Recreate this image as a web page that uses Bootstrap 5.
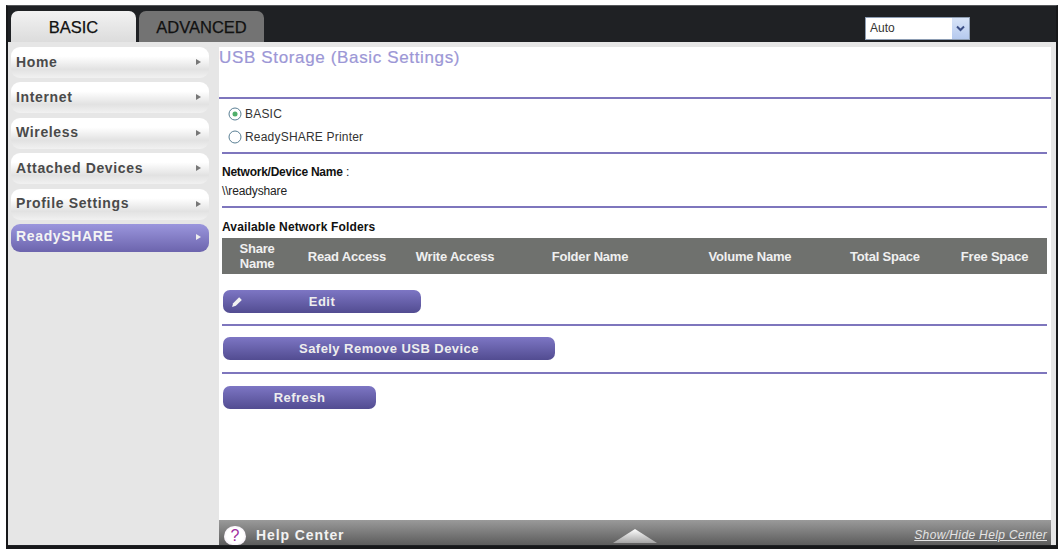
<!DOCTYPE html>
<html lang="en">
  <head>
    <meta charset="UTF-8" />
    <meta name="viewport" content="width=device-width, initial-scale=1.0" />
    <title>USB Storage (Basic Settings)</title>
    <link rel="stylesheet" href="https://cdn.jsdelivr.net/npm/bootstrap@5.3.0/dist/css/bootstrap.min.css" />
    <style>
      html, body { height: 551px; overflow: hidden; background: #fff; }
      body { font-family: "Liberation Sans", Arial, sans-serif; font-size: 12px; color: #222; padding: 5px 4px 2px 6px; }
      .frame { height: 544px; width: 1052px; background: #1f2124; border: solid #17181a; border-width: 1px 2px 3px 2px; border-top-color: #55575a; }
      .topbar { height: 36px; padding: 5px 0 0 3px; }
      .tab-btn { width: 125px; height: 31px; border-radius: 7px 7px 0 0; font-size: 16.5px; text-align: center; line-height: 33px; color: #111; text-decoration: none; -webkit-text-stroke: .25px #111; }
      .tab-on { background: linear-gradient(#f2f2f2, #dcdcdc); }
      .tab-off { background: #737373; margin-left: 3px; }
      .lang-pick { width: 105px; height: 23px; margin-top: 6px; background: #fff; border: 1px solid #8d9db3; font-size: 12px; padding: 0 0 0 4px; line-height: 21px; color: #333; }
      .lang-arrow { width: 17px; height: 21px; background: linear-gradient(#d8e4f8, #b5c9ee); }
      .lang-spot { margin-right: 86px; }
      .shell { height: 503px; background: #e6e6e6; padding: 5px 5px 0 0; }
      .side { width: 211px; padding-left: 3px; }
      .side-item { width: 198px; height: 31px; margin-bottom: 4.4px; padding: 0 6px 1px 5px; border-radius: 9px; background: linear-gradient(#fff 0%, #fff 30%, #e2e2e2 72%, #f1f1f1 100%); font-size: 14px; font-weight: 700; letter-spacing: .65px; color: #4a4a4a; text-decoration: none; }
      .side-item.on { height: 28px; padding-bottom: 2px; background: linear-gradient(#9b96dd, #6c64ad); color: #f4f4f4; }
      .side-caret { width: 0; height: 0; border-left: 5px solid #777; border-top: 3.5px solid transparent; border-bottom: 3.5px solid transparent; margin-right: 2px; }
      .side-item.on .side-caret { border-left-color: #eee; }
      .main { width: 832px; height: 498px; background: #fff; }
      .main-body { padding: 0 4px 0 3px; }
      .page-title { font-size: 17px; font-weight: 400; letter-spacing: .65px; color: #9c97d6; margin: 0 0 0 -3px; padding-top: 1px; height: 50px; line-height: 20px; -webkit-text-stroke: .2px #9c97d6; }
      .rule { height: 2px; background: #7e76bd; margin: 0; border: 0; opacity: 1; }
      .rule-full { margin: 0 -4px 0 -3px; }
      .radio-row { height: 23px; padding-left: 5px; font-size: 12px; letter-spacing: .2px; color: #333; gap: 2px; }
      .first-radio { margin-top: 3px; }
      .label-strong { font-weight: 700; color: #111; letter-spacing: -.25px; }
      .avail-label { font-weight: 700; color: #111; letter-spacing: .15px; margin-top: 12px; }
      .share-path { margin-top: 4px; letter-spacing: -.15px; }
      .dev-name { margin-top: 11px; }
      .path-rule { margin-top: 7px; }
      .folder-table { width: 825px; table-layout: fixed; border-collapse: collapse; background: #6f716e; color: #f0f0f0; font-weight: 700; font-size: 13px; letter-spacing: -.2px; margin-top: 3px; }
      .folder-table th { height: 36px; padding: 0; text-align: center; line-height: 15px; font-weight: 700; }
      .pill { height: 23px; margin-left: 1px; border-radius: 7px; background: linear-gradient(#7d76c4, #524c91); color: #eee; font-weight: 700; font-size: 13px; letter-spacing: .45px; }
      .help-bar { height: 25px; margin-top: auto; background: linear-gradient(#9a9a9a, #5c5c5c); color: #f2f2f2; }
      .help-icon { width: 22px; height: 19px; margin: 6px 0 0 5px; border-radius: 11px 11px 9px 9px; background: radial-gradient(#fff 55%, #e6d6ea); color: #a02fa0; font-size: 16px; line-height: 19px; text-align: center; }
      .help-title { font-size: 14px; font-weight: 700; letter-spacing: .9px; margin-left: 10px; padding-top: 5px; }
      .help-tri { width: 44px; height: 14px; margin-top: 9px; }
      .help-link { font-size: 12px; font-style: italic; letter-spacing: .35px; color: #e4e4e4; text-decoration: underline; margin-right: 4px; padding-top: 6px; }
    </style>
  </head>
  <body>
    <div class="frame d-flex flex-column">
      <div class="topbar d-flex">
        <a class="tab-btn tab-on d-block" href="#">BASIC</a>
        <a class="tab-btn tab-off d-block" href="#">ADVANCED</a>
        <div class="lang-spot ms-auto">
          <div class="lang-pick d-flex justify-content-between">
            <span>Auto</span>
            <span class="lang-arrow d-flex align-items-center justify-content-center">
              <svg width="9" height="7" viewBox="0 0 9 7"><path d="M1 1.5 L4.5 5 L8 1.5" fill="none" stroke="#3c4f86" stroke-width="2" /></svg>
            </span>
          </div>
        </div>
      </div>

      <div class="shell d-flex">
        <div class="side d-flex flex-column flex-shrink-0">
          <a class="side-item d-flex align-items-center justify-content-between" href="#">Home<span class="side-caret"></span></a>
          <a class="side-item d-flex align-items-center justify-content-between" href="#">Internet<span class="side-caret"></span></a>
          <a class="side-item d-flex align-items-center justify-content-between" href="#">Wireless<span class="side-caret"></span></a>
          <a class="side-item d-flex align-items-center justify-content-between" href="#">Attached Devices<span class="side-caret"></span></a>
          <a class="side-item d-flex align-items-center justify-content-between" href="#">Profile Settings<span class="side-caret"></span></a>
          <a class="side-item on d-flex align-items-center justify-content-between" href="#">ReadySHARE<span class="side-caret"></span></a>
        </div>

        <div class="main d-flex flex-column">
          <div class="main-body">
            <h1 class="page-title">USB Storage (Basic Settings)</h1>
            <hr class="rule rule-full" />

            <div class="radio-row first-radio d-flex align-items-center">
              <svg width="16" height="16" viewBox="0 0 16 16"><circle cx="8" cy="8" r="6" fill="#fff" stroke="#5a7f94" /><circle cx="8" cy="8" r="2.5" fill="#4fae6a" /></svg>
              <span>BASIC</span>
            </div>
            <div class="radio-row d-flex align-items-center">
              <svg width="16" height="16" viewBox="0 0 16 16"><circle cx="8" cy="8" r="6" fill="#fff" stroke="#5a7f94" /></svg>
              <span>ReadySHARE Printer</span>
            </div>
            <hr class="rule mt-1" />

            <div class="dev-name lh-sm"><span class="label-strong">Network/Device Name</span> :</div>
            <div class="share-path lh-sm">\\readyshare</div>
            <hr class="rule path-rule" />

            <div class="avail-label lh-sm">Available Network Folders</div>
            <table class="folder-table">
              <colgroup>
                <col style="width: 70px" /><col style="width: 110px" /><col style="width: 106px" /><col style="width: 164px" /><col style="width: 156px" /><col style="width: 114px" /><col style="width: 105px" />
              </colgroup>
              <tr>
                <th>Share<br />Name</th><th>Read Access</th><th>Write Access</th><th>Folder Name</th><th>Volume Name</th><th>Total Space</th><th>Free Space</th>
              </tr>
            </table>

            <div class="pill d-flex align-items-center justify-content-center position-relative" style="width: 198px; margin-top: 16px">
              <svg class="position-absolute start-0 ms-2" width="13" height="13" viewBox="0 0 12 12"><path d="M1 11 L2 7.5 L7.5 2 L10 4.5 L4.5 10 Z" fill="#f2f2f2" /></svg>
              <span>Edit</span>
            </div>
            <hr class="rule" style="margin-top: 11px" />
            <div class="pill d-flex align-items-center justify-content-center" style="width: 332px; margin-top: 11px">Safely Remove USB Device</div>
            <hr class="rule" style="margin-top: 12px" />
            <div class="pill d-flex align-items-center justify-content-center" style="width: 153px; margin-top: 12px">Refresh</div>
          </div>

          <div class="help-bar d-flex position-relative">
            <span class="help-icon d-block flex-shrink-0">?</span>
            <span class="help-title d-block">Help Center</span>
            <svg class="help-tri position-absolute" style="left: 394px" viewBox="0 0 44 14"><defs><linearGradient id="triFill" x1="0" y1="0" x2="0" y2="1"><stop offset="0" stop-color="#fff" /><stop offset="1" stop-color="#a5a5a5" /></linearGradient></defs><path d="M22 0 L44 14 L0 14 Z" fill="url(#triFill)" /></svg>
            <a class="help-link ms-auto" href="#">Show/Hide Help Center</a>
          </div>
        </div>
      </div>
    </div>
    <script src="https://cdn.jsdelivr.net/npm/bootstrap@5.3.0/dist/js/bootstrap.bundle.min.js"></script>
  </body>
</html>
